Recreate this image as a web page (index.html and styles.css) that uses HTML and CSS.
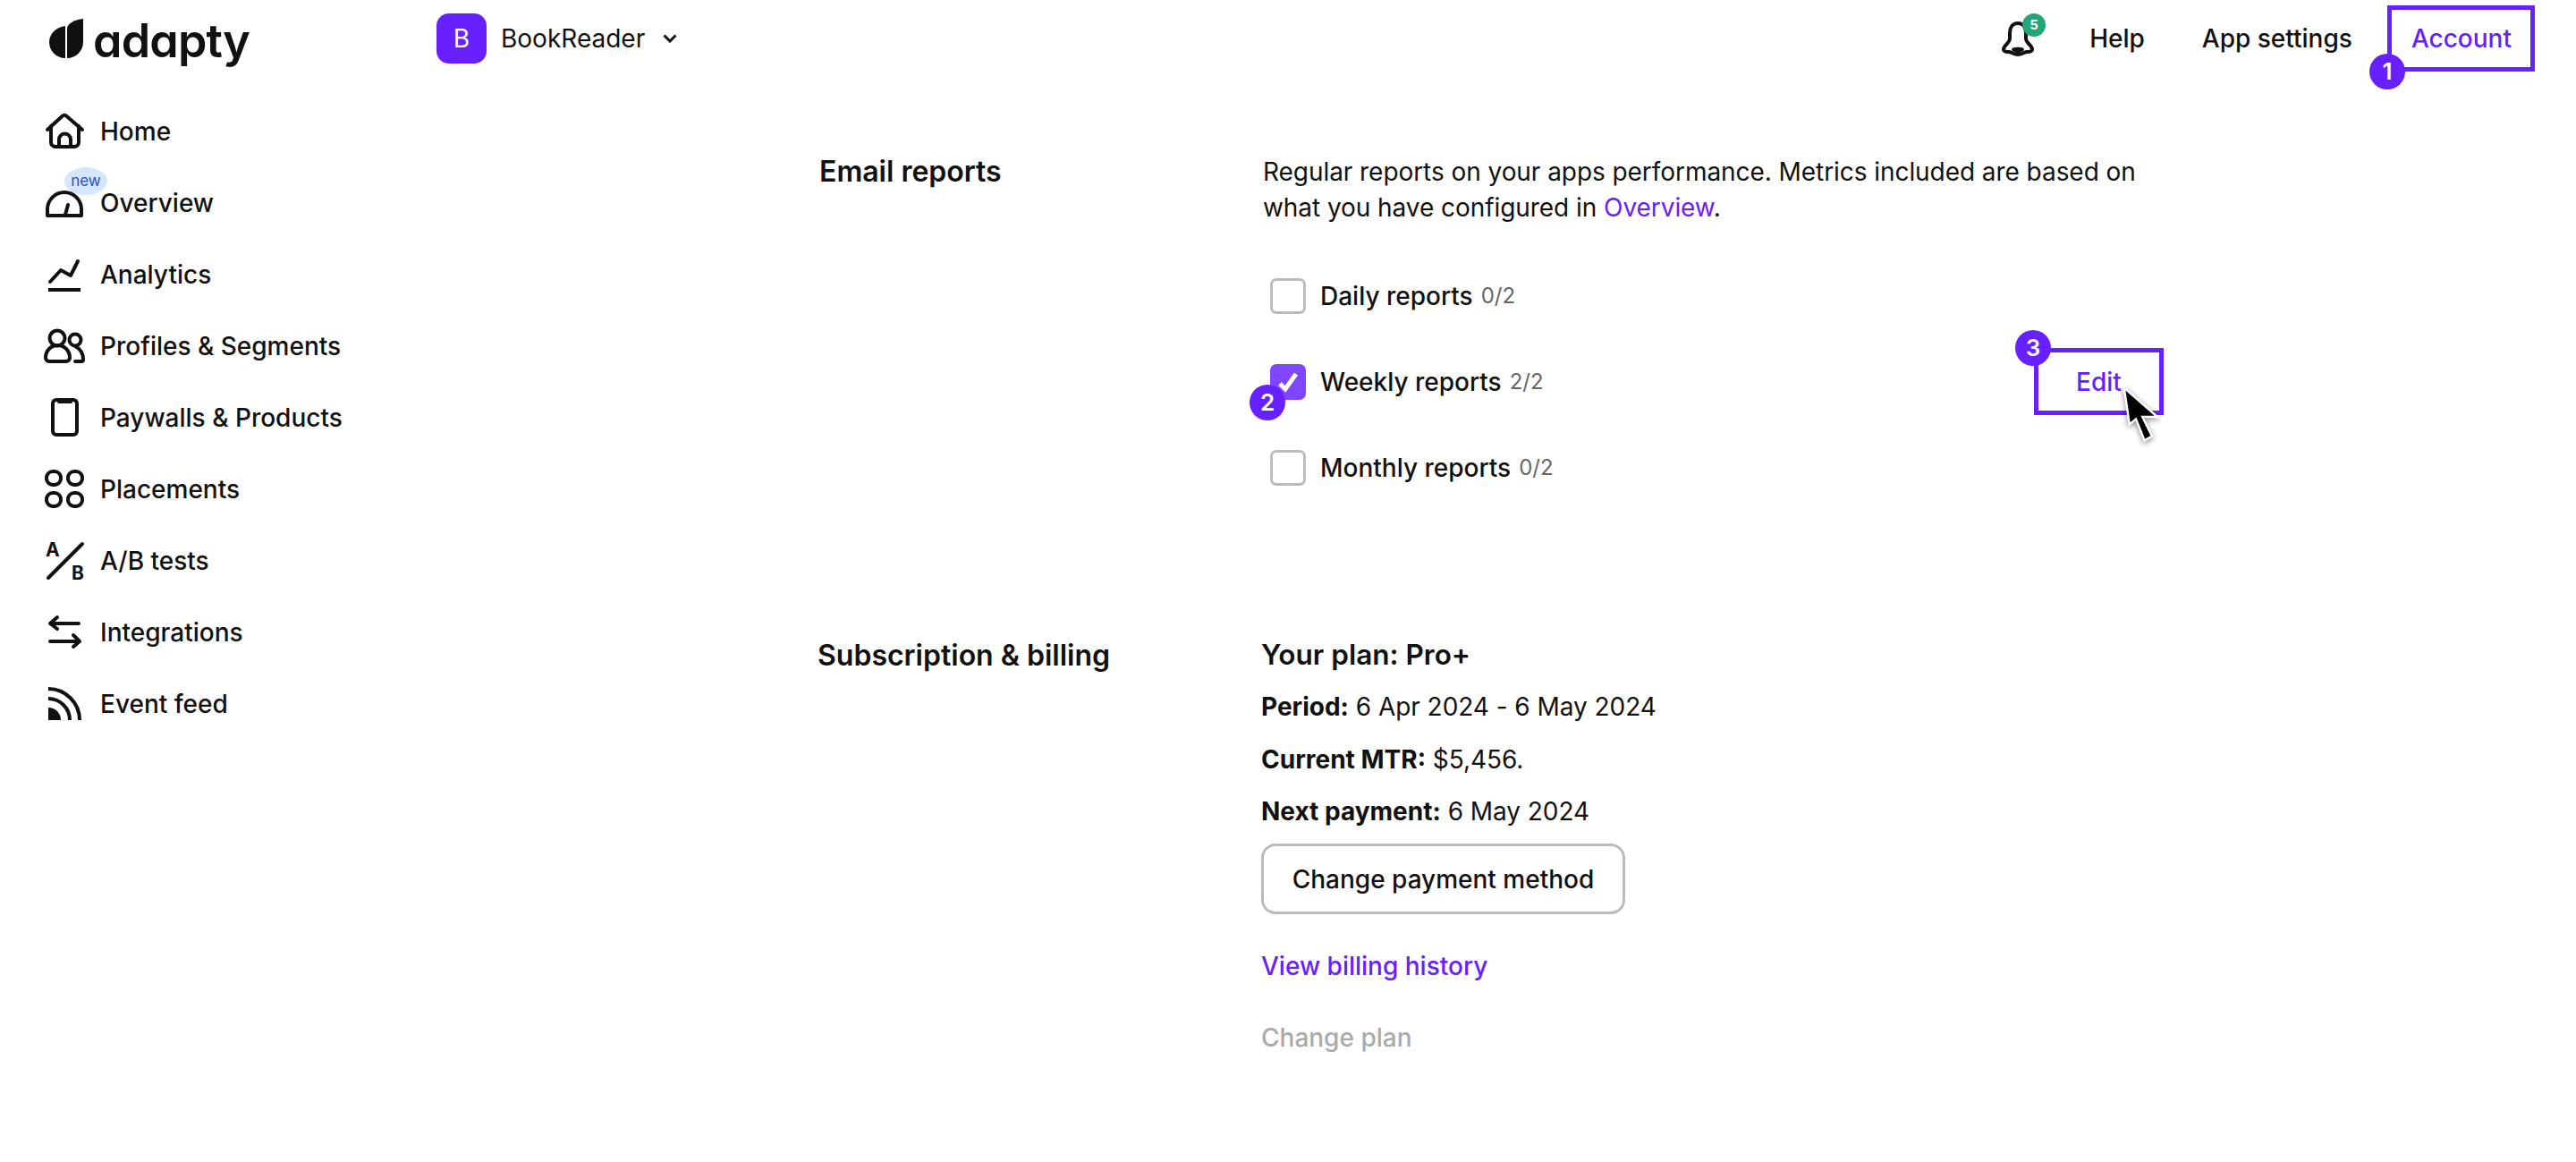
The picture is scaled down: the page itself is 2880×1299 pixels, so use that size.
FILE: index.html
```html
<!DOCTYPE html>
<html lang="en">
<head>
  <meta charset="UTF-8">
  <meta name="viewport" content="width=device-width, initial-scale=1.0">
  <title>Adapty - Account</title>
  <link rel="stylesheet" href="styles.css">
</head>
<body>
  <header class="topbar">
    <a class="logo" href="#">
      <svg class="logo-mark" viewBox="0 0 40 46" width="40" height="46">
        <path d="M19 9V45C9 45 1 37 1 27 1 18 9 10 19 9Z"/>
        <path d="M21 45V12C21 6 30 2 39 1V27C39 37 31 45 21 45Z"/>
      </svg>
      <span class="logo-text">adapty</span>
    </a>
    <div class="app-switch">
      <span class="app-badge">B</span>
      <span class="app-name">BookReader</span>
      <svg class="chevron" viewBox="0 0 16 10" width="16" height="10"><path d="M1.5 1.5 8 8l6.5-6.5"/></svg>
    </div>
    <nav class="top-links">
      <span class="bell">
        <svg class="icon" viewBox="0 0 48 48">
          <path d="M23 7C17 7 14 12 14 18v6c0 5-7 8-7 12 0 3 3 3 6 3 3 0 4 3 10 3s7-3 10-3c3 0 6 0 6-3 0-4-7-7-7-12v-6C32 12 29 7 23 7Z"/>
          <path class="solid" d="M16 36c0-3 14-3 14 0 0 2-3 4-7 4s-7-2-7-4Z"/>
        </svg>
        <span class="bell-count">5</span>
      </span>
      <a href="#">Help</a>
      <a href="#">App settings</a>
      <a class="account" href="#">Account<span class="step step-1">1</span></a>
    </nav>
  </header>

  <div class="page">
    <aside class="sidebar">
      <a class="nav-item" href="#">
        <svg class="icon" viewBox="0 0 48 48"><path d="M5 22 22 6.500q2-1.500 4 0L44 22"/><path d="M9 18V36a5 5 0 0 0 5 5H35a5 5 0 0 0 5-5V18"/><path d="M18 41V33a6.500 6.500 0 0 1 13 0V41"/></svg>
        Home
      </a>
      <a class="nav-item" href="#">
        <svg class="icon" viewBox="0 0 48 48"><path d="M5 38V31a19 19 0 0 1 38 0V38Z"/><path d="M28 26 25 37"/></svg>
        Overview
        <span class="new-tag">new</span>
      </a>
      <a class="nav-item" href="#">
        <svg class="icon" viewBox="0 0 48 48"><path d="M8 32 20 19 31 25 39 9"/><path class="flat" d="M6 41H42"/></svg>
        Analytics
      </a>
      <a class="nav-item" href="#">
        <svg class="icon" viewBox="0 0 48 48"><circle cx="16" cy="15" r="8.500"/><path d="M7 41H26a4 4 0 0 0 4-4c0-8-6-14-13.500-14S3 29 3 37a4 4 0 0 0 4 4Z"/><circle cx="36" cy="17" r="6.500"/><path d="M36 41H43a2 2 0 0 0 2-2c0-7-3-12-9-15"/></svg>
        Profiles &amp; Segments
      </a>
      <a class="nav-item" href="#">
        <svg class="icon" viewBox="0 0 48 48"><rect x="11" y="4" width="27" height="39" rx="4"/><path d="M18 6H31"/></svg>
        Paywalls &amp; Products
      </a>
      <a class="nav-item" href="#">
        <svg class="icon" viewBox="0 0 48 48"><rect x="4" y="4" width="16" height="15" rx="7"/><rect x="28" y="4" width="16" height="15" rx="7"/><rect x="4" y="28" width="16" height="15" rx="7"/><rect x="28" y="28" width="16" height="15" rx="7"/></svg>
        Placements
      </a>
      <a class="nav-item" href="#">
        <svg class="icon" viewBox="0 0 48 48"><text class="ab-letter" x="3" y="19">A</text><path d="M6 43 44 5"/><text class="ab-letter" x="32" y="45">B</text></svg>
        A/B tests
      </a>
      <a class="nav-item" href="#">
        <svg class="icon" viewBox="0 0 48 48"><path d="M40 14H8M16 7 8 14l8 6"/><path d="M8 34H41M34 27l7 7-7 6"/></svg>
        Integrations
      </a>
      <a class="nav-item" href="#">
        <svg class="icon" viewBox="0 0 48 48"><path class="solid" d="M6 42V28A14 14 0 0 1 20 42Z"/><path class="flat" d="M6 7A35 35 0 0 1 41 42"/><path class="flat" d="M6 18A24 24 0 0 1 30 42"/></svg>
        Event feed
      </a>
    </aside>

    <main class="content">
      <section class="section">
        <h2 class="section-title">Email reports</h2>
        <div class="section-body">
          <p class="intro">Regular reports on your apps performance. Metrics included are based on what you have configured in <a class="link" href="#">Overview</a>.</p>
          <ul class="report-list">
            <li class="report">
              <span class="checkbox"></span>
              <span class="report-name">Daily reports</span>
              <span class="report-count">0/2</span>
            </li>
            <li class="report">
              <span class="checkbox checked">
                <svg viewBox="0 0 40 40" width="40" height="40"><path d="M11 22l6 6L29 11"/></svg>
                <span class="step step-2">2</span>
              </span>
              <span class="report-name">Weekly reports</span>
              <span class="report-count">2/2</span>
              <a class="edit" href="#">Edit
                <span class="step step-3">3</span>
                <svg class="cursor" viewBox="0 0 40 60" width="48" height="72"><path d="M4 3 9 37 15 32 23 52 30 48 21 30 35 30Z"/></svg>
              </a>
            </li>
            <li class="report">
              <span class="checkbox"></span>
              <span class="report-name">Monthly reports</span>
              <span class="report-count">0/2</span>
            </li>
          </ul>
        </div>
      </section>

      <section class="section billing">
        <h2 class="section-title">Subscription &amp; billing</h2>
        <div class="section-body">
          <h3 class="plan">Your plan: Pro+</h3>
          <p class="fact"><strong>Period:</strong> 6 Apr 2024 - 6 May 2024</p>
          <p class="fact"><strong>Current MTR:</strong> $5,456.</p>
          <p class="fact"><strong>Next payment:</strong> 6 May 2024</p>
          <button class="btn" type="button">Change payment method</button>
          <a class="action link" href="#">View billing history</a>
          <a class="action muted" href="#">Change plan</a>
        </div>
      </section>
    </main>
  </div>
</body>
</html>
```

FILE: styles.css
```css
* {
  box-sizing: border-box;
}
body {
  margin: 0;
  background: #fff;
  color: #111;
  font-family: Inter, "Noto Sans", sans-serif;
  font-size: 28px;
  line-height: 40px;
}
a {
  color: inherit;
  text-decoration: none;
}
h2, h3, p, ul {
  margin: 0;
  padding: 0;
}

.icon {
  width: 48px;
  height: 48px;
  flex: none;
  overflow: visible;
  fill: none;
  stroke: #111;
  stroke-width: 4;
  stroke-linecap: round;
  stroke-linejoin: round;
}
.icon .solid {
  fill: #111;
  stroke: none;
}
.icon .flat {
  stroke-linecap: butt;
}

/* top bar */
.topbar {
  height: 86px;
  display: flex;
  align-items: center;
  padding-left: 54px;
}
.logo {
  width: 434px;
  display: flex;
  align-items: center;
  gap: 10px;
}
.logo-mark {
  fill: #111;
}
.logo-text {
  margin-top: 5px;
  font-size: 52px;
  font-weight: 600;
  letter-spacing: -.8px;
  line-height: 60px;
  font-feature-settings: "cv11";
}
.app-switch {
  display: flex;
  align-items: center;
}
.app-badge {
  width: 56px;
  height: 56px;
  border-radius: 14px;
  background: #6720ff;
  color: #fff;
  text-align: center;
  line-height: 56px;
}
.app-name {
  margin-left: 16px;
}
.chevron {
  margin-left: 20px;
  fill: none;
  stroke: #111;
  stroke-width: 3;
}
.top-links {
  margin-left: auto;
  display: flex;
  align-items: center;
  margin-right: 72px;
}
.top-links a {
  margin-left: 64px;
  font-weight: 500;
}
.bell {
  position: relative;
  display: flex;
  margin-right: -9px;
}
.bell-count {
  position: absolute;
  top: -4px;
  left: 28px;
  width: 26px;
  height: 26px;
  border-radius: 50%;
  background: #22a776;
  color: #fff;
  font-size: 15px;
  font-weight: 700;
  line-height: 26px;
  text-align: center;
}
.top-links .account {
  position: relative;
  margin-left: 66px;
  color: #6720ff;
}
.account::after {
  content: "";
  position: absolute;
  left: -27px;
  right: -26px;
  top: -17px;
  bottom: -17px;
  border: 5px solid #6720ff;
}
.step {
  position: absolute;
  z-index: 2;
  width: 40px;
  height: 40px;
  border-radius: 50%;
  background: #6720ff;
  color: #fff;
  font-size: 26px;
  font-weight: 600;
  line-height: 40px;
  text-align: center;
}
.step-1 {
  left: -47px;
  top: 37px;
}
.step-2 {
  left: -23px;
  top: 23px;
}
.step-3 {
  left: -26px;
  top: -25px;
}

/* page */
.page {
  display: flex;
}
.sidebar {
  width: 450px;
  flex: none;
  padding: 21px 0 0 48px;
}
.nav-item {
  position: relative;
  height: 80px;
  display: flex;
  align-items: center;
  gap: 16px;
  font-weight: 500;
}
.new-tag {
  position: absolute;
  left: 24px;
  top: 0;
  width: 48px;
  height: 31px;
  border-radius: 50%;
  background: #d5e6ff;
  color: #2a4fc4;
  font-size: 17px;
  font-weight: 400;
  line-height: 31px;
  text-align: center;
}
.ab-letter {
  fill: #111;
  stroke: none;
  font-size: 21px;
  font-weight: 700;
}

/* content */
.content {
  flex: 1;
  padding: 86px 0 0 466px;
}
.section {
  display: grid;
  grid-template-columns: 496px 1fr;
}
.section-title {
  font-size: 32px;
  font-weight: 600;
}
.intro {
  width: 1000px;
  letter-spacing: -.06px;
}
.link {
  color: #6720ff;
}
.report-list {
  list-style: none;
  margin: 59px 0 0 8px;
  width: 999px;
  display: flex;
  flex-direction: column;
  gap: 56px;
}
.report {
  height: 40px;
  display: flex;
  align-items: center;
  font-weight: 500;
}
.checkbox {
  position: relative;
  width: 40px;
  height: 40px;
  flex: none;
  margin-right: 16px;
  border: 3px solid #bbb;
  border-radius: 7px;
}
.checkbox.checked {
  border: 0;
  background: #7f46ff;
  fill: none;
  stroke: #fff;
  stroke-width: 5;
}
.report-count {
  margin-left: 9px;
  color: #666;
  font-size: 24px;
  font-weight: 400;
}
.edit {
  position: relative;
  margin: 0 0 1px auto;
  width: 145px;
  height: 75px;
  border: 5px solid #6720ff;
  color: #6720ff;
  line-height: 67px;
  text-align: center;
}
.cursor {
  position: absolute;
  left: 91px;
  top: 36px;
  fill: #000;
  stroke: #fff;
  stroke-width: 2;
  filter: drop-shadow(0 2px 3px rgba(0, 0, 0, .45));
}

.billing {
  margin: 170px 0 0 -2px;
}
.plan {
  margin: -1px 0 -.500px;
  font-size: 31.500px;
  font-weight: 600;
}
.fact {
  margin-top: 18.500px;
  letter-spacing: -.05px;
}
.fact strong {
  font-weight: 650;
  letter-spacing: 0;
}
.btn {
  display: block;
  margin-top: 16px;
  width: 407px;
  height: 79px;
  border: 3px solid #bbb;
  border-radius: 16px;
  background: #fff;
  color: #111;
  font: inherit;
  font-weight: 500;
}
.action {
  display: block;
  margin-top: 38px;
  font-weight: 500;
}
.muted {
  margin-top: 40px;
  color: #aaa;
}
```
